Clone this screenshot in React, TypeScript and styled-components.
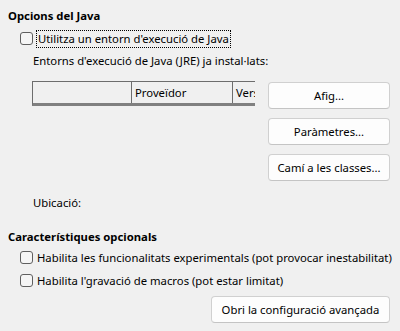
import React from "react";
import styled, { createGlobalStyle } from "styled-components";

const Global = createGlobalStyle`
  html, body { margin: 0; padding: 0; background: #f0f0f0; }
  body {
    font-family: "Noto Sans", "Liberation Sans", sans-serif;
    font-size: 11.3px;
    color: #000;
  }
`;

const Page = styled.div`
  width: 400px;
  height: 331px;
  box-sizing: border-box;
  padding: 8px 10px 0 8px;
  display: flex;
  flex-direction: column;
  overflow: hidden;
`;

const SectionTitle = styled.div<{ $mt?: number }>`
  font-weight: 700;
  line-height: 16px;
  margin-top: ${(p) => p.$mt ?? 0}px;
`;

const CheckRow = styled.label<{ $mt?: number }>`
  display: flex;
  align-items: center;
  gap: 4px;
  height: 17px;
  margin-top: ${(p) => p.$mt ?? 0}px;
  margin-left: 12px;
  line-height: 16px;
  white-space: nowrap;
`;

const Box = styled.span`
  width: 13px;
  height: 13px;
  box-sizing: border-box;
  border: 1px solid #5f5f5f;
  border-radius: 3px;
  background: #f5f5f5;
  flex: none;
`;

const Focus = styled.span`
  outline: 1px dotted #000;
  outline-offset: 0;
  padding: 0 1px;
`;

const Indent = styled.div<{ $mt?: number }>`
  margin-left: 25px;
  margin-top: ${(p) => p.$mt ?? 0}px;
  line-height: 16px;
`;

const JreArea = styled.div`
  display: flex;
  margin-left: 24px;
  margin-top: 12px;
  gap: 13px;
`;

const Table = styled.div`
  width: 223px;
  height: 108px;
  overflow: hidden;
`;

const Header = styled.div`
  display: flex;
  height: 21px;
  box-sizing: content-box;
  border-top: 1px solid #6d6d6d;
  border-left: 1px solid #6d6d6d;
  border-bottom: 3px solid #808080;
  white-space: nowrap;
`;

const Col = styled.div<{ $w: number }>`
  width: ${(p) => p.$w}px;
  flex: none;
  box-sizing: border-box;
  border-right: 1px solid #6d6d6d;
  padding-left: 3px;
  line-height: 21px;
  overflow: hidden;
`;

const Buttons = styled.div`
  display: flex;
  flex-direction: column;
  gap: 9px;
  margin-top: 1px;
`;

const Button = styled.button<{ $w?: number }>`
  width: ${(p) => p.$w ?? 122}px;
  height: 27px;
  box-sizing: border-box;
  background: #fdfdfd;
  border: 1px solid #d0d0d0;
  border-bottom-color: #c4c4c4;
  border-radius: 4px;
  font: inherit;
  color: #000;
  padding: 0;
`;

const FooterRow = styled.div`
  display: flex;
  justify-content: flex-end;
  margin-top: 7px;
`;

export default function App() {
  return (
    <>
      <Global />
      <Page>
        <SectionTitle>Opcions del Java</SectionTitle>
        <CheckRow $mt={6}>
          <Box />
          <Focus>Utilitza un entorn d'execució de Java</Focus>
        </CheckRow>
        <Indent $mt={6}>Entorns d'execució de Java (JRE) ja instal·lats:</Indent>
        <JreArea>
          <Table>
            <Header>
              <Col $w={99}></Col>
              <Col $w={101}>Proveïdor</Col>
              <Col $w={60}>Versió</Col>
            </Header>
          </Table>
          <Buttons>
            <Button>Afig...</Button>
            <Button>Paràmetres...</Button>
            <Button>Camí a les classes...</Button>
          </Buttons>
        </JreArea>
        <Indent $mt={6}>Ubicació:</Indent>
        <SectionTitle $mt={18}>Característiques opcionals</SectionTitle>
        <CheckRow $mt={4}>
          <Box />
          <span>Habilita les funcionalitats experimentals (pot provocar inestabilitat)</span>
        </CheckRow>
        <CheckRow $mt={6}>
          <Box />
          <span>Habilita l'gravació de macros (pot estar limitat)</span>
        </CheckRow>
        <FooterRow>
          <Button $w={179}>Obri la configuració avançada</Button>
        </FooterRow>
      </Page>
    </>
  );
}
